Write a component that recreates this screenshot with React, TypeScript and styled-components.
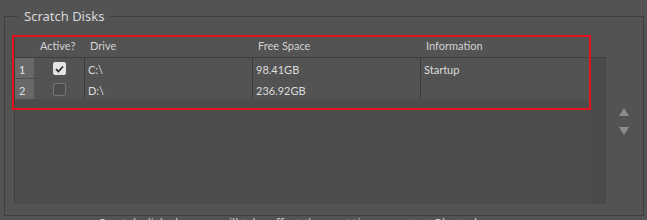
import React from 'react';
import styled, { createGlobalStyle } from 'styled-components';

const GlobalStyle = createGlobalStyle`
    html, body {
        margin: 0;
        padding: 0;
        background: #535353;
        overflow: hidden;
    }
    body {
        font-family: "Noto Sans", "DejaVu Sans", sans-serif;
        color: #d4d4d4;
    }
`

const Page = styled.div`
    width: 647px;
    height: 220px;
    padding: 8px 4px 0;
    box-sizing: border-box;
    overflow: hidden;
`

const GroupBox = styled.fieldset`
    margin: 0;
    padding: 11px 0 11px 9px;
    border: 1px solid #3e3e3e;
    width: 640px;
    box-sizing: border-box;
    min-width: 0;

    legend {
        margin-left: 4px;
        padding: 0 6px;
        font-size: 13px;
        line-height: 17px;
        color: #d8d8d8;
    }
`

const Content = styled.div`
    display: flex;
    flex-flow: row nowrap;
    align-items: flex-start;
`

const TableFrame = styled.div`
    position: relative;
    width: 592px;
    height: 168px;
    display: flex;
    flex-flow: column nowrap;
    border-left: 1px solid #404040;
    box-sizing: border-box;
    font-family: Lato, "Noto Sans", sans-serif;
`

const Highlight = styled.div`
    position: absolute;
    left: -3px;
    top: -1px;
    width: 579px;
    height: 75px;
    border: 2px solid #e3121c;
    box-sizing: border-box;
    pointer-events: none;
`

const HeaderRow = styled.div`
    display: grid;
    grid-template-columns: 20px 50px 168px 168px 1fr;
    height: 22px;
    border-bottom: 1px solid #3d3d3d;
    box-sizing: border-box;
    font-size: 11px;
    color: #d2d2d2;
`

const HeaderCell = styled.div`
    padding: 0 0 2px 5px;
    display: flex;
    align-items: center;
    white-space: nowrap;
`

const Body = styled.div`
    flex: 1;
    display: flex;
    flex-flow: row nowrap;
`

const RowsArea = styled.div`
    flex: 1;
    background: #4c4c4c;
    display: flex;
    flex-flow: column nowrap;
`

const Row = styled.div`
    display: grid;
    grid-template-columns: 20px 50px 168px 168px 1fr;
    height: 21px;
    background: #535353;
    border-bottom: 1px solid #4e4e4e;
    box-sizing: border-box;
    font-size: 11px;
    color: #dcdcdc;
`

const NumCell = styled.div`
    background: #686868;
    border-right: 1px solid #535353;
    display: flex;
    align-items: center;
    padding: 2px 0 0 4px;
    color: #dfe4ee;
`

const Cell = styled.div<{ $center?: boolean; $last?: boolean }>`
    display: flex;
    align-items: center;
    justify-content: ${p => (p.$center ? 'center' : 'flex-start')};
    padding: 2px 0 0 ${p => (p.$center ? '0' : '3px')};
    border-right: ${p => (p.$last ? 'none' : '1px solid #3b3b3b')};
    white-space: nowrap;
`

const CheckBox = styled.span<{ $checked?: boolean }>`
    width: 13px;
    height: 13px;
    box-sizing: border-box;
    border-radius: 2px;
    display: inline-flex;
    align-items: center;
    justify-content: center;
    background: ${p => (p.$checked ? '#e4e4e4' : '#4d4d4d')};
    border: 1px solid ${p => (p.$checked ? '#e4e4e4' : '#767676')};
    margin-top: -1px;
`

const ScrollTrack = styled.div`
    width: 16px;
    background: #4a4a4a;
`

const Arrows = styled.div`
    width: 36px;
    padding-top: 72px;
    display: flex;
    flex-flow: column nowrap;
    align-items: center;
    gap: 11px;
`

const ArrowButton = styled.button`
    border: none;
    background: none;
    padding: 0;
    width: 10px;
    height: 8px;
    display: block;
    svg {
        display: block;
    }
`

const Note = styled.div`
    padding-left: 95px;
    margin-top: 0;
    font-size: 12px;
    line-height: 16px;
    color: #cfcfcf;
    white-space: nowrap;
`

const disks = [
    { n: 1, active: true, drive: 'C:\\', free: '98.41GB', info: 'Startup' },
    { n: 2, active: false, drive: 'D:\\', free: '236.92GB', info: '' },
]

export default function App() {
    return (
        <Page>
            <GlobalStyle />
            <GroupBox>
                <legend>Scratch Disks</legend>
                <Content>
                    <TableFrame>
                        <HeaderRow>
                            <HeaderCell />
                            <HeaderCell>Active?</HeaderCell>
                            <HeaderCell>Drive</HeaderCell>
                            <HeaderCell>Free Space</HeaderCell>
                            <HeaderCell>Information</HeaderCell>
                        </HeaderRow>
                        <Body>
                            <RowsArea>
                                {disks.map(d => (
                                    <Row key={d.n}>
                                        <NumCell>{d.n}</NumCell>
                                        <Cell $center>
                                            <CheckBox $checked={d.active}>
                                                {d.active && (
                                                    <svg width="9" height="8" viewBox="0 0 9 8">
                                                        <path d="M1 4.2 L3.4 6.5 L8 1.5" fill="none" stroke="#2e2e2e" strokeWidth="1.8" />
                                                    </svg>
                                                )}
                                            </CheckBox>
                                        </Cell>
                                        <Cell>{d.drive}</Cell>
                                        <Cell>{d.free}</Cell>
                                        <Cell $last>{d.info}</Cell>
                                    </Row>
                                ))}
                            </RowsArea>
                            <ScrollTrack />
                        </Body>
                        <Highlight />
                    </TableFrame>
                    <Arrows>
                        <ArrowButton aria-label="Move up">
                            <svg width="10" height="8" viewBox="0 0 10 8">
                                <path d="M5 0 L10 8 L0 8 Z" fill="#8d8d8d" />
                            </svg>
                        </ArrowButton>
                        <ArrowButton aria-label="Move down">
                            <svg width="10" height="8" viewBox="0 0 10 8">
                                <path d="M0 0 L10 0 L5 8 Z" fill="#8d8d8d" />
                            </svg>
                        </ArrowButton>
                    </Arrows>
                </Content>
            </GroupBox>
            <Note>Scratch disk changes will take effect the next time you start Photoshop.</Note>
        </Page>
    )
}
